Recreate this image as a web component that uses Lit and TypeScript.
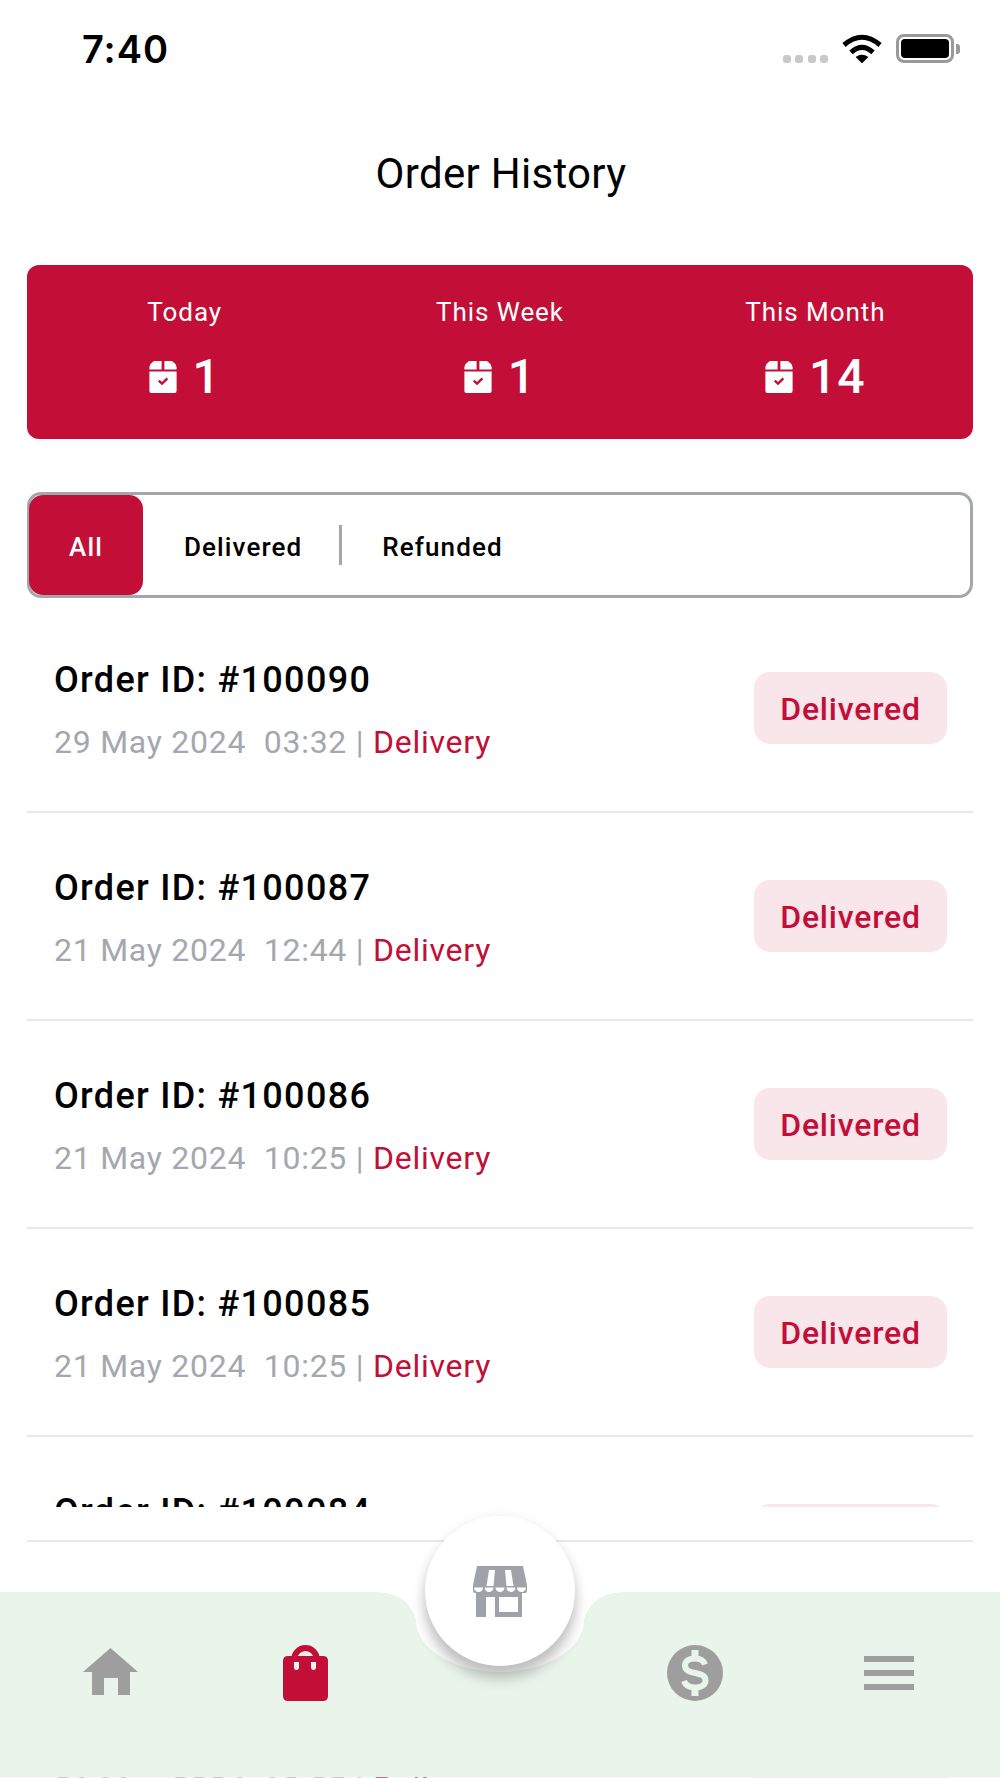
import { LitElement, html, css, svg, unsafeCSS } from "lit";
import { customElement } from "lit/decorators.js";

const RED = "#c30f37";
const GREEN = "#e9f4eb";
const red = unsafeCSS(RED);

// fecha y hora de cada pedido de la lista
const ORDERS = [
  { id: "100090", date: "29 May 2024", time: "03:32" },
  { id: "100087", date: "21 May 2024", time: "12:44" },
  { id: "100086", date: "21 May 2024", time: "10:25" },
  { id: "100085", date: "21 May 2024", time: "10:25" },
  { id: "100084", date: "21 May 2024", time: "10:25" },
];

const STATS = [
  { label: "Today", value: 1 },
  { label: "This Week", value: 1 },
  { label: "This Month", value: 14 },
];

const boxIcon = html`<svg class="box" viewBox="0 0 28 32" width="28" height="32">
  <path fill="#fff" d="M5 0H12.6V8.5H0.4V6Q1.5 2 5 0ZM15.4 0H23Q26.5 2 27.6 6V8.5H15.4Z" />
  <path fill="#fff" d="M0.4 10.5H27.6V30Q27.6 32 25.6 32H2.4Q0.4 32 0.4 30Z" />
  <path fill="none" stroke="${RED}" stroke-width="2.4" d="M9.8 19.6L13 22.6L18.4 17.4" />
</svg>`;

const wifiIcon = html`<svg viewBox="0 0 40 29" width="40" height="29">
  <g fill="none" stroke="#000" stroke-width="5">
    <path d="M2 11Q20 -4.5 38 11" />
    <path d="M9 18.4Q20 8.4 31 18.4" />
  </g>
  <path d="M13.6 23Q20 18.6 26.4 23L20 29.4Z" />
</svg>`;

const homeIcon = svg`<path fill="#9e9e9e" d="M27.5 0L55 24H47V47H35V30H21V47H9V24H0Z" transform="translate(83 56)" />`;

const bagIcon = svg`<g transform="translate(283 53)">
  <path fill="none" stroke="${RED}" stroke-width="6" d="M11 18V15A11.5 12 0 0 1 34 15V18" />
  <path fill="${RED}" d="M5 11H40Q45 11 45 16V51Q45 56 40 56H5Q0 56 0 51V16Q0 11 5 11Z" />
  <path fill="${GREEN}" d="M11 17H16V22Q16 25 13.5 25Q11 25 11 22ZM28 17H33V22Q33 25 30.5 25Q28 25 28 22Z" />
</g>`;

const dollarIcon = svg`<g transform="translate(667 53)">
  <circle cx="28" cy="28" r="28" fill="#9e9e9e" />
  <path fill="none" stroke="${GREEN}" stroke-width="6"
    d="M38 19.5C36.5 15 32.5 13.5 28 13.5C22.5 13.5 18 16 18 20.5C18 31 38.5 25 38.5 35.5C38.5 40 34 42.5 28 42.5C22.5 42.5 18.5 40.5 17 36" />
  <path fill="${GREEN}" d="M24.5 5H31.5V15H24.5ZM24.5 41H31.5V51H24.5Z" />
</g>`;

const menuIcon = svg`<path fill="#9e9e9e" d="M864 64H914V70H864ZM864 78H914V84H864ZM864 92H914V98H864Z" />`;

const storeIcon = html`<svg viewBox="0 0 54 51" width="54" height="51">
  <path fill="#9fa3a9" d="M4 0H50L54 19V25Q54 27 52 27H2Q0 27 0 25V19Z" />
  <path fill="#fff" d="M16 4H22L20.5 20H13.5ZM32 4H38L40.5 20H33.5Z" />
  <path
    fill="#fff"
    d="M1 21.5H10A4.5 4.5 0 0 1 1 21.5ZM11.5 21.5H20.5A4.5 4.5 0 0 1 11.5 21.5ZM22.5 21.5H31.5A4.5 4.5 0 0 1 22.5 21.5ZM33.5 21.5H42.5A4.5 4.5 0 0 1 33.5 21.5ZM44 21.5H53A4.5 4.5 0 0 1 44 21.5Z"
  />
  <path fill="#9fa3a9" d="M3 27H49V51H22V31H13V51H3Z" />
  <path fill="#fff" d="M26 31H45V46H26Z" />
</svg>`;

@customElement("order-row")
class OrderRow extends LitElement {
  static properties = {
    orderId: { type: String },
    date: { type: String },
    time: { type: String },
  };

  declare orderId: string;
  declare date: string;
  declare time: string;

  static styles = css`
    :host {
      display: flex;
      align-items: center;
      justify-content: space-between;
      box-sizing: border-box;
      height: 208px;
      margin: 0 27px;
      padding: 0 26px 0 27px;
      border-bottom: 2px solid #e9e9ea;
    }
    .info {
      padding-top: 4px;
    }
    .title {
      margin: 0;
      font-size: 36px;
      line-height: 44px;
      font-weight: 500;
      letter-spacing: 1.3px;
      color: #000;
    }
    .meta {
      margin: 20px 0 0;
      font-size: 32px;
      line-height: 40px;
      letter-spacing: 0.75px;
      color: #a4a8ae;
      white-space: pre;
    }
    .type {
      color: ${red};
    }
    .badge {
      display: flex;
      align-items: center;
      justify-content: center;
      box-sizing: border-box;
      width: 193px;
      height: 72px;
      padding-top: 2px;
      border-radius: 16px;
      background: #f9e6eb;
      color: ${red};
      font-size: 32px;
      font-weight: 500;
      letter-spacing: 0.8px;
    }
  `;

  render() {
    return html`
      <div class="info">
        <p class="title">Order ID: #${this.orderId}</p>
        <p class="meta">${this.date}  ${this.time} | <span class="type">Delivery</span></p>
      </div>
      <div class="badge">Delivered</div>
    `;
  }
}

@customElement("app-root")
class AppRoot extends LitElement {
  static styles = css`
    :host {
      display: block;
      width: 1000px;
      height: 1778px;
      overflow: hidden;
      background: #fff;
      font-family: Roboto, "Liberation Sans", sans-serif;
    }
    .status {
      display: flex;
      align-items: flex-start;
      justify-content: space-between;
      height: 110px;
      padding: 28px 40px 0 82px;
      box-sizing: border-box;
    }
    .time {
      font-family: Inter, Roboto, sans-serif;
      font-size: 38px;
      line-height: 42px;
      font-weight: 600;
      letter-spacing: 1px;
      color: #000;
    }
    .indicators {
      display: flex;
      align-items: flex-end;
      padding-top: 6px;
    }
    .dots {
      display: flex;
      gap: 4.5px;
      margin: 0 14px 0 0;
    }
    .dots i {
      width: 8px;
      height: 8px;
      border-radius: 3px;
      background: #c9c9c9;
    }
    .battery {
      display: flex;
      align-items: center;
      margin-left: 14px;
    }
    .battery .shell {
      box-sizing: border-box;
      width: 58px;
      height: 29px;
      padding: 2px;
      border: 3px solid #9a9a9a;
      border-radius: 8px;
    }
    .battery .fill {
      height: 100%;
      border-radius: 4px;
      background: #000;
    }
    .battery .nub {
      width: 4px;
      height: 10px;
      margin-left: 2px;
      border-radius: 0 3px 3px 0;
      background: #9a9a9a;
    }
    h1 {
      margin: 0;
      height: 155px;
      padding: 39px 0 0 2px;
      box-sizing: border-box;
      text-align: center;
      font-size: 42px;
      line-height: 50px;
      font-weight: 400;
      letter-spacing: 0.3px;
      color: #000;
    }
    .stats {
      display: grid;
      grid-template-columns: repeat(3, 1fr);
      height: 174px;
      margin: 0 27px;
      padding-top: 30px;
      box-sizing: border-box;
      border-radius: 12px;
      background: ${red};
      color: #fff;
      text-align: center;
    }
    .stat .label {
      font-size: 26px;
      line-height: 34px;
      letter-spacing: 0.95px;
    }
    .stat .value {
      display: flex;
      align-items: center;
      justify-content: center;
      gap: 16px;
      margin-top: 20px;
      font-size: 48px;
      line-height: 56px;
      font-weight: 500;
      letter-spacing: 1px;
    }
    .tabs {
      display: flex;
      align-items: center;
      box-sizing: border-box;
      height: 106px;
      margin: 53px 27px 7px;
      border: 3px solid #a3a7ad;
      border-radius: 14px;
      font-size: 26px;
      font-weight: 500;
      letter-spacing: 1.1px;
      color: #000;
    }
    .tabs .all {
      display: flex;
      align-items: center;
      justify-content: center;
      align-self: stretch;
      width: 114px;
      margin-left: -1px;
      padding-top: 3px;
      box-sizing: border-box;
      border-radius: 14px;
      background: ${red};
      color: #fff;
    }
    .tabs .label {
      padding-top: 4px;
    }
    .tabs .delivered {
      margin-left: 41px;
    }
    .tabs .sep {
      width: 3px;
      height: 40px;
      margin: 0 40px 0 37px;
      background: #a3a7ad;
    }
    .list {
      height: 902px;
      overflow: hidden;
    }
    .rule {
      height: 2px;
      margin: 33px 27px 50px;
      background: #e9e9ea;
    }
    .nav {
      position: relative;
      height: 185px;
    }
    .nav > svg {
      display: block;
    }
    /* el boton central se monta sobre la barra verde */
    .fab {
      position: absolute;
      left: 425px;
      top: -76px;
      display: flex;
      align-items: center;
      justify-content: center;
      width: 150px;
      height: 150px;
      border-radius: 50%;
      background: #fff;
      box-shadow: 0 12px 14px rgba(0, 0, 0, 0.24), 0 0 14px rgba(0, 0, 0, 0.05);
    }
    .peek {
      display: flex;
      justify-content: space-between;
      height: 1px;
      overflow: hidden;
      padding: 0 53px 0 54px;
      font-size: 32px;
      line-height: 40px;
      letter-spacing: 0.75px;
      color: #a4a8ae;
      white-space: pre;
      background: #f3f9f5;
    }
    .peek .text {
      margin-top: -10px;
      opacity: 0.6;
    }
    .peek span {
      color: ${red};
    }
    .peek .pill {
      width: 193px;
      height: 1px;
      background: #f9e6eb;
    }
  `;

  render() {
    return html`
      <div class="status">
        <div class="time">7:40</div>
        <div class="indicators">
          <div class="dots"><i></i><i></i><i></i><i></i></div>
          ${wifiIcon}
          <div class="battery">
            <div class="shell"><div class="fill"></div></div>
            <div class="nub"></div>
          </div>
        </div>
      </div>
      <h1>Order History</h1>
      <div class="stats">
        ${STATS.map(
          (s) => html`<div class="stat">
            <div class="label">${s.label}</div>
            <div class="value">${boxIcon}<span>${s.value}</span></div>
          </div>`
        )}
      </div>
      <div class="tabs">
        <div class="all">All</div>
        <div class="label delivered">Delivered</div>
        <div class="sep"></div>
        <div class="label">Refunded</div>
      </div>
      <div class="list">
        ${ORDERS.map(
          (o) => html`<order-row .orderId=${o.id} .date=${o.date} .time=${o.time}></order-row>`
        )}
      </div>
      <div class="rule"></div>
      <div class="nav">
        <svg viewBox="0 0 1000 185" width="1000" height="185">
          <path
            fill="${GREEN}"
            d="M0 0H372C396 0 410 8 416 28A84 52 0 0 0 584 28C590 8 604 0 628 0H1000V185H0Z"
          />
          ${homeIcon} ${bagIcon} ${dollarIcon} ${menuIcon}
        </svg>
        <div class="fab">${storeIcon}</div>
      </div>
      <div class="peek">
        <div class="text">21 May 2024  10:25 | <span>Delivery</span></div>
        <div class="pill"></div>
      </div>
    `;
  }
}
